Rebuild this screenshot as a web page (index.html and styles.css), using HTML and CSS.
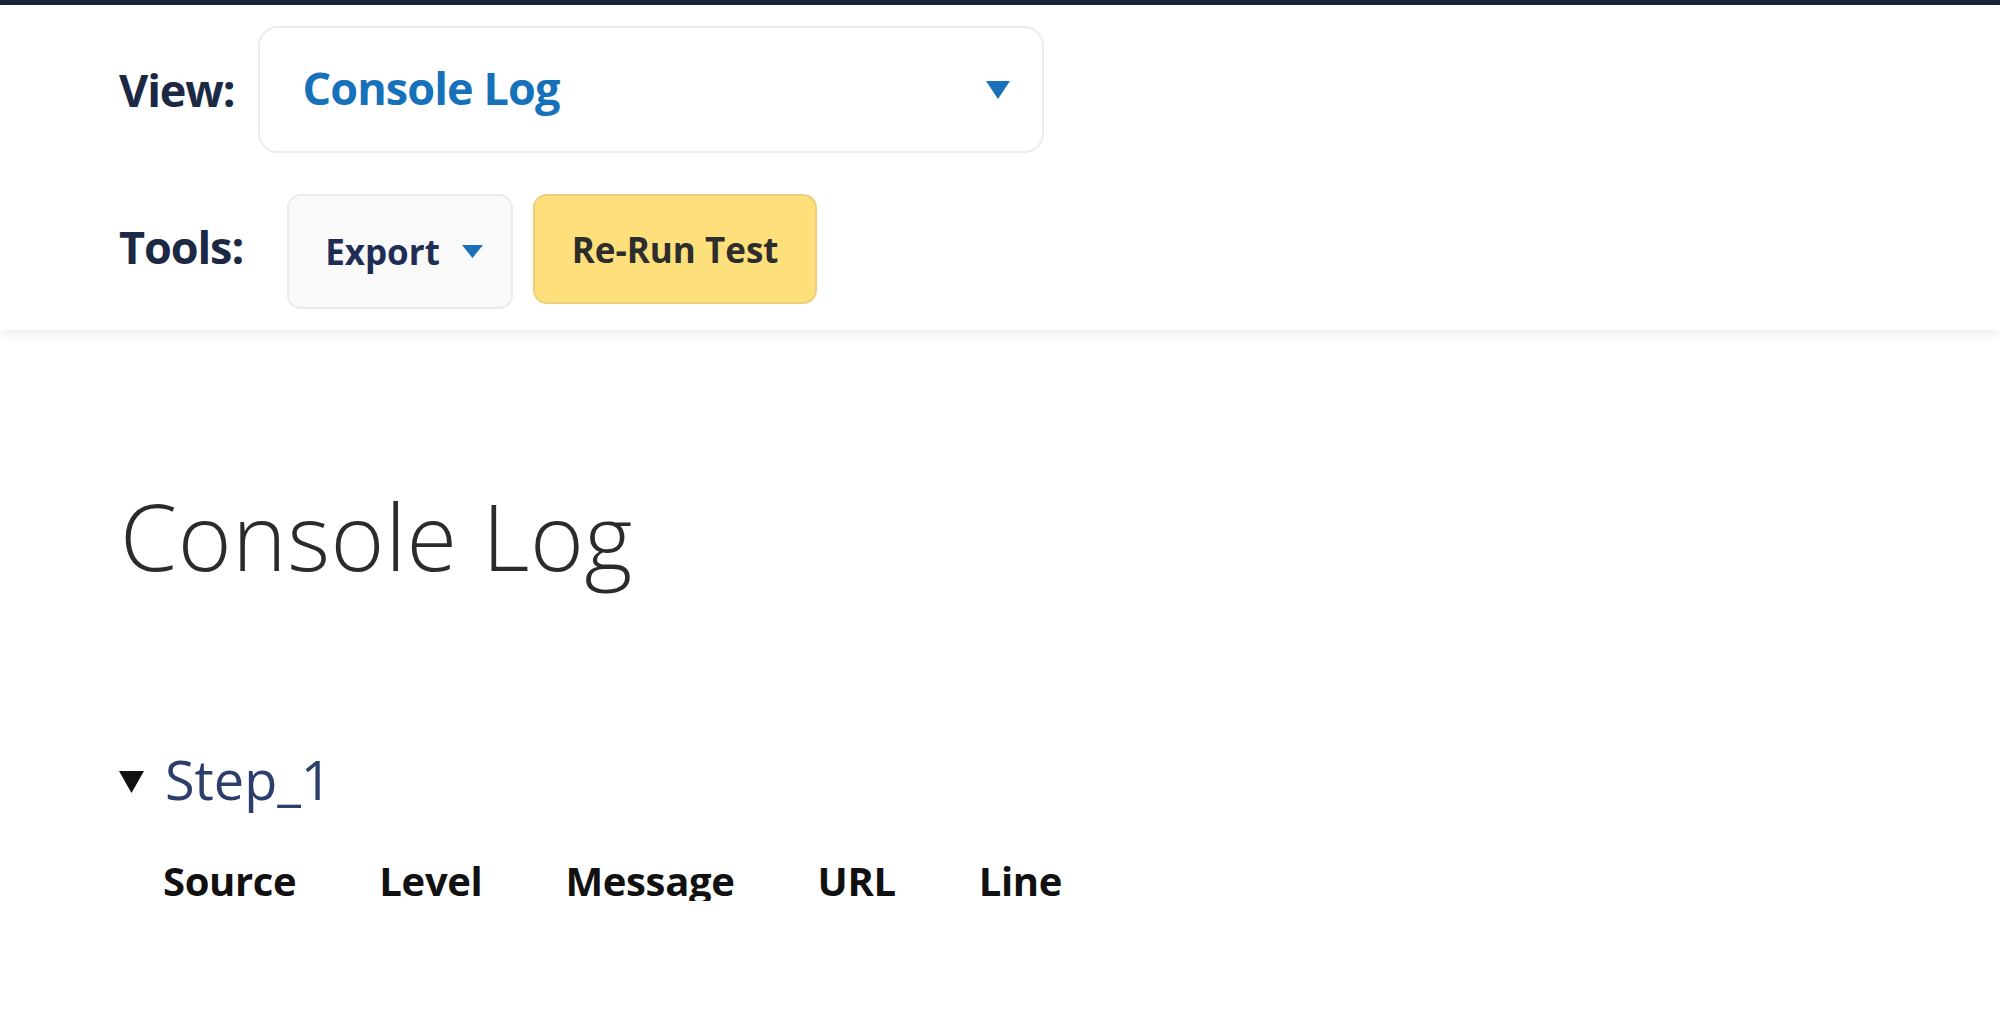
FILE: index.html
```html
<!DOCTYPE html>
<html>
<head>
<meta charset="utf-8">
<link rel="stylesheet" href="styles.css">
</head>
<body>
<div class="topbar"></div>
<header class="toolbar">
  <div class="row row-view">
    <span class="label label-view">View:</span>
    <div class="select">
      <span class="select-text">Console Log</span>
      <svg class="select-arrow" width="24" height="18" viewBox="0 0 24 18"><path d="M0 0H24L12 18Z" fill="#1a71b9"/></svg>
    </div>
  </div>
  <div class="row row-tools">
    <span class="label label-tools">Tools:</span>
    <button class="btn btn-export">Export<svg class="btn-arrow" width="21" height="13" viewBox="0 0 21 13"><path d="M0 0H21L10.5 13Z" fill="#1a71b9"/></svg></button>
    <button class="btn btn-rerun">Re-Run Test</button>
  </div>
</header>
<main class="content">
  <h1 class="title">Console Log</h1>
  <section class="step">
    <div class="step-head">
      <svg class="step-caret" width="25" height="22" viewBox="0 0 25 22"><path d="M0 0H25L12.5 22Z" fill="#111"/></svg>
      <span class="step-name">Step_1</span>
    </div>
    <div class="cols">
      <span class="col">Source</span>
      <span class="col">Level</span>
      <span class="col">Message</span>
      <span class="col">URL</span>
      <span class="col">Line</span>
    </div>
  </section>
</main>
</body>
</html>
```
FILE: styles.css
```css
* { box-sizing: border-box; }
html, body { margin: 0; padding: 0; background: #fff; }
body { font-family: "Open Sans", "Liberation Sans", sans-serif; overflow: hidden; }

.topbar { height: 5px; background: #1b2438; }

.toolbar {
  padding: 21px 0 0 119px;
  height: 325px;
  background: #fff;
  box-shadow: 0 6px 10px rgba(0,0,0,0.06);
  position: relative;
}

.row { display: flex; }
.row-view { align-items: center; height: 127px; }
.row-tools { margin-top: 41px; align-items: flex-start; }

.label {
  font-weight: 700;
  font-size: 45px;
  color: #1b2944;
  line-height: 1;
  letter-spacing: -1.1px;
}
.label-view { margin-right: 24px; }
.label-tools { margin-right: 44px; margin-top: 30px; }

.select {
  width: 786px;
  height: 127px;
  border: 2px solid #ececec;
  border-radius: 20px;
  display: flex;
  align-items: center;
  justify-content: space-between;
  padding: 0 32px 0 42px;
}
.select-text {
  font-weight: 700;
  font-size: 45px;
  color: #1671ba;
  line-height: 1;
  letter-spacing: -0.9px;
  position: relative;
  top: -2px;
}

.btn {
  font-family: inherit;
  font-weight: 700;
  font-size: 35px;
  line-height: 1;
  border-radius: 14px;
  display: flex;
  align-items: center;
  cursor: pointer;
}
.btn-export {
  width: 226px;
  height: 115px;
  background: #f9f9f9;
  border: 2px solid #ebebeb;
  color: #1f2d56;
  gap: 22px;
  padding: 0 0 0 36px;
  justify-content: flex-start;
}
.btn-rerun {
  margin-left: 20px;
  width: 284px;
  height: 110px;
  background: #fde07b;
  border: 2px solid #ead07a;
  color: #2d2d2d;
  padding: 0;
  justify-content: center;
}

.content { padding: 0 0 0 120px; }
.title {
  margin: 160px 0 0 0;
  font-weight: 300;
  font-size: 92px;
  line-height: 1;
  color: #2b2b2b;
  letter-spacing: 0.6px;
}

.step { margin-top: 170px; }
.step-head { display: flex; align-items: center; margin-left: -1px; }
.step-caret { margin-right: 21px; margin-top: 6px; }
.step-name {
  font-size: 54px;
  font-weight: 400;
  color: #2c3f6c;
  line-height: 1;
}

.cols {
  display: flex;
  gap: 83px;
  margin: 55px 0 0 43px;
}
.col {
  font-weight: 700;
  font-size: 40px;
  color: #111;
  line-height: 1;
  letter-spacing: -0.35px;
}
```
